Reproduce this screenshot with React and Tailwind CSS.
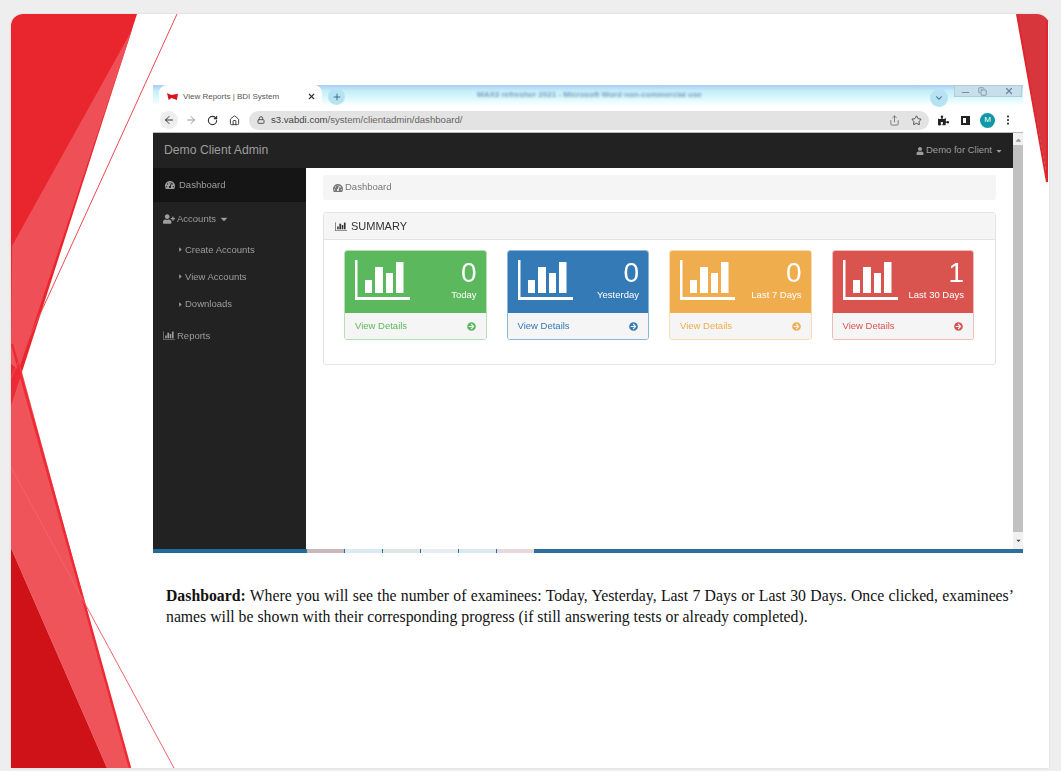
import React from 'react'
import { ArrowLeft, ArrowRight, RotateCw, Home, Lock, Star, Share, Plus, X, ChevronDown, Minus, MoreVertical, Copy } from 'lucide-react'
import { FaTachometerAlt, FaUserPlus, FaCaretDown, FaCaretRight, FaUser, FaArrowCircleRight, FaPuzzlePiece } from 'react-icons/fa'

const cards = [
  { n: 0, label: 'Today', head: 'bg-[#5cb85c]', text: 'text-[#5cb85c]', border: 'border-[#b5dfb5]' },
  { n: 0, label: 'Yesterday', head: 'bg-[#337ab7]', text: 'text-[#337ab7]', border: 'border-[#8db5d8]' },
  { n: 0, label: 'Last 7 Days', head: 'bg-[#f0ad4e]', text: 'text-[#f0ad4e]', border: 'border-[#f8dcb4]' },
  { n: 1, label: 'Last 30 Days', head: 'bg-[#d9534f]', text: 'text-[#d9534f]', border: 'border-[#f0bcba]' },
]

const taskbarSlots = ['#c9b8bc', '#dbe9f2', '#dce8e4', '#e8edf2', '#dbe9f2', '#e8d8dc']

function BarsIcon({ className }) {
  return (
    <svg viewBox="0 0 55 40" className={className} fill="currentColor">
      <path d="M0 0h2.5v37H55v3H0z" />
      <rect x="10" y="20" width="7" height="13" />
      <rect x="20" y="7" width="8" height="26" />
      <rect x="31" y="13" width="7" height="20" />
      <rect x="41" y="2" width="7.5" height="31" />
    </svg>
  )
}

function SlideArt() {
  return (
    <svg viewBox="0 0 1038 754" className="absolute inset-0 h-full w-full">
      <polygon points="0,0 126,0 11,358 0,392" fill="#e9252e" />
      <polygon points="121,16 1,232 0,326 9,352" fill="#ef5058" />
      <polygon points="0,326 11,358 119,754 96,754 0,534" fill="#f0545b" />
      <line x1="1" y1="330" x2="119" y2="754" stroke="#ee2b34" strokeWidth="2.5" />
      <polygon points="0,534 96,754 0,754" fill="#cf1218" />
      <polygon points="0,350 11,358 0,392" fill="#ee2b34" />
      <line x1="166" y1="0" x2="0" y2="364" stroke="#ee4a52" strokeWidth="1" />
      <line x1="0" y1="453" x2="163" y2="754" stroke="#f0656b" strokeWidth="1" />
      <polygon points="1006,0 1037,0 1037,168" fill="#d8363d" />
      <polyline points="1006,0 1036,168" fill="none" stroke="#e0252c" strokeWidth="2" />
      <line x1="1036" y1="6" x2="1036" y2="168" stroke="#e0252c" strokeWidth="2" />
    </svg>
  )
}

function TabStrip() {
  return (
    <div className="flex h-[23px] items-center bg-[linear-gradient(180deg,#a9cbf2_0%,#c4eef9_25%,#d8f8fb_55%,#ffffff_90%)]">
      <div className="ml-[6px] flex h-[23px] w-[163px] items-center rounded-t-lg bg-white pl-[8px] pr-[6px]">
        <span className="mr-[5px] h-[7px] w-[11px] bg-[#d8151c] [clip-path:polygon(0_0,40%_30%,100%_10%,90%_100%,40%_70%,15%_100%)]" />
        <span className="flex-1 text-[8px] text-[#555]">View Reports | BDI System</span>
        <X size={9} strokeWidth={3} className="text-[#333]" />
      </div>
      <div className="ml-[6px] flex h-[17px] w-[17px] items-center justify-center rounded-full bg-[#b5e3f3]">
        <Plus size={10} strokeWidth={2} className="text-[#3a5a6a]" />
      </div>
      <span className="mb-[3px] ml-[132px] text-[8px] font-bold text-[#7d9bc0] blur-[1px]">MAX3 refresher 2021 - Microsoft Word non-commercial use</span>
      <div className="flex-1" />
      <div className="mr-[6px] mt-[2px] flex h-[18px] w-[18px] items-center justify-center rounded-full bg-[#b5e3f3]">
        <ChevronDown size={10} strokeWidth={2.5} className="text-[#44606e]" />
      </div>
      <div className="mb-[11px] mr-[1px] flex h-[12px] w-[68px] items-center border border-[#b3ccd8] bg-[#c6dfeb] text-[#6d8794]">
        <Minus size={11} className="ml-[5px] mt-[2px]" />
        <Copy size={9} className="ml-[7px]" />
        <X size={10} strokeWidth={3} className="ml-[17px]" />
      </div>
    </div>
  )
}

function Toolbar() {
  return (
    <div className="flex h-[25px] items-center border-b border-[#bbb] bg-white pl-[7px]">
      <div className="flex h-[18px] w-[18px] items-center justify-center rounded-full bg-[#eee]">
        <ArrowLeft size={12} strokeWidth={2} className="text-[#333]" />
      </div>
      <ArrowRight size={12} className="ml-[7px] text-[#999]" />
      <RotateCw size={11} strokeWidth={2.5} className="ml-[10px] text-[#333]" />
      <Home size={11} strokeWidth={2} className="ml-[11px] text-[#333]" />
      <div className="ml-[9px] flex h-[19px] w-[680px] items-center rounded-full bg-[#e3e3e3] pl-[8px] pr-[7px]">
        <Lock size={8} strokeWidth={3} className="text-[#555]" />
        <span className="ml-[6px] flex-1 text-[9.6px] text-[#444]">
          s3.vabdi.com<span className="text-[#666]">/system/clientadmin/dashboard/</span>
        </span>
        <Share size={11} className="text-[#777]" />
        <Star size={11} strokeWidth={2} className="ml-[11px] text-[#444]" />
      </div>
      <FaPuzzlePiece size={11} className="ml-[9px] text-[#222]" />
      <span className="ml-[12px] h-[9px] w-[9px] border-2 border-[#222] bg-[linear-gradient(90deg,#fff_55%,#222_55%)]" />
      <span className="ml-[10px] flex h-[15px] w-[15px] items-center justify-center rounded-full bg-[#0e97a5] text-[8px] text-white">M</span>
      <MoreVertical size={12} strokeWidth={2.5} className="ml-[7px] text-[#333]" />
    </div>
  )
}

function NavItem({ children, className }) {
  return <div className={`flex items-center text-[9.5px] text-[#9d9d9d] ${className}`}>{children}</div>
}

function Sidebar() {
  return (
    <aside className="h-full w-[153px] bg-[#222]">
      <NavItem className="h-[34px] gap-[4px] bg-[#151515] pl-[12px]">
        <FaTachometerAlt size={10} /> Dashboard
      </NavItem>
      <NavItem className="mt-[7px] h-[20px] gap-[2px] pl-[10px]">
        <FaUserPlus size={12} /> Accounts <FaCaretDown size={10} className="ml-[1px]" />
      </NavItem>
      <div className="mt-[7px] pl-[24px]">
        {['Create Accounts', 'View Accounts', 'Downloads'].map((t) => (
          <NavItem key={t} className="h-[27.3px] gap-[1px]">
            <FaCaretRight size={7} /> {t}
          </NavItem>
        ))}
      </div>
      <NavItem className="mt-[8px] h-[20px] gap-[2px] pl-[10px]">
        <BarsIcon className="h-[9px] w-[12px]" /> Reports
      </NavItem>
    </aside>
  )
}

function StatCard({ card }) {
  return (
    <div className={`w-[142.5px] overflow-hidden rounded-[3px] border ${card.border}`}>
      <div className={`flex h-[62px] items-start justify-between pl-[10px] pr-[9px] pt-[9px] text-white ${card.head}`}>
        <BarsIcon className="h-[40px] w-[55px]" />
        <div className="text-right">
          <div className="text-[28px] leading-[26px]">{card.n}</div>
          <div className="mt-[3px] text-[9.5px] leading-[12px]">{card.label}</div>
        </div>
      </div>
      <div className={`flex h-[26px] items-center justify-between bg-[#f5f5f5] px-[10px] text-[9.5px] ${card.text}`}>
        <span>View Details</span>
        <FaArrowCircleRight size={9} />
      </div>
    </div>
  )
}

function Content() {
  return (
    <main className="flex-1 bg-white px-[17px] pt-[7px]">
      <div className="flex h-[25px] items-center gap-[2px] rounded-[3px] bg-[#f5f5f5] pl-[10px] text-[9.5px] text-[#777]">
        <FaTachometerAlt size={10} /> Dashboard
      </div>
      <section className="mt-[12px] h-[153px] rounded-[3px] border border-[#e3e3e3]">
        <div className="flex h-[27px] items-center gap-[4px] border-b border-[#e3e3e3] bg-[#f5f5f5] pl-[11px] text-[11px] text-[#333]">
          <BarsIcon className="h-[9px] w-[12px]" /> SUMMARY
        </div>
        <div className="flex gap-[20px] pl-[20px] pt-[10px]">
          {cards.map((c) => (
            <StatCard key={c.label} card={c} />
          ))}
        </div>
      </section>
    </main>
  )
}

function Scrollbar() {
  return (
    <div className="flex w-[10px] flex-col items-center bg-[#f1f1f1]">
      <FaCaretDown size={7} className="mt-[3px] h-[9px] rotate-180 text-[#999]" />
      <div className="w-full flex-1 bg-[#c1c1c1]" />
      <FaCaretDown size={7} className="my-[5px] text-[#444]" />
    </div>
  )
}

function Taskbar() {
  return (
    <div className="flex h-[4px] bg-[#2d6f9c]">
      <div className="w-[153px] bg-[#1f6b99]" />
      {taskbarSlots.map((c, i) => (
        <span key={i} style={{ backgroundColor: c }} className="ml-[1px] w-[37px]" />
      ))}
    </div>
  )
}

export default function App() {
  return (
    <div className="h-[771px] bg-[#eee] pl-[11px] pt-[14px] font-['Liberation_Sans',sans-serif]">
      <div className="relative h-[754px] w-[1038px] overflow-hidden rounded-t-xl bg-white shadow-[0_0_2px_#ccc]">
        <SlideArt />
        <div className="relative pl-[142px] pt-[71px]">
          <div className="w-[870px] blur-[0.4px]">
            <TabStrip />
            <Toolbar />
            <div className="flex h-[416px]">
              <div className="flex flex-1 flex-col">
                <div className="flex h-[35px] items-center justify-between bg-[#222] pl-[11px] pr-[10px] text-[#9d9d9d]">
                  <span className="text-[12.2px]">Demo Client Admin</span>
                  <span className="flex items-center gap-[2px] text-[9.5px]">
                    <FaUser size={8} /> Demo for Client <FaCaretDown size={8} className="ml-[1px]" />
                  </span>
                </div>
                <div className="flex min-h-0 flex-1">
                  <Sidebar />
                  <Content />
                </div>
              </div>
              <Scrollbar />
            </div>
            <Taskbar />
          </div>
          <p className="ml-[13px] mt-[32px] w-[848px] text-justify font-['Liberation_Serif',serif] text-[15.75px] leading-[21px] text-[#111]">
            <b>Dashboard:</b> Where you will see the number of examinees: Today, Yesterday, Last 7 Days or Last 30 Days. Once clicked, examinees&rsquo; names will be shown with their corresponding progress (if still answering tests or already completed).
          </p>
        </div>
      </div>
    </div>
  )
}
